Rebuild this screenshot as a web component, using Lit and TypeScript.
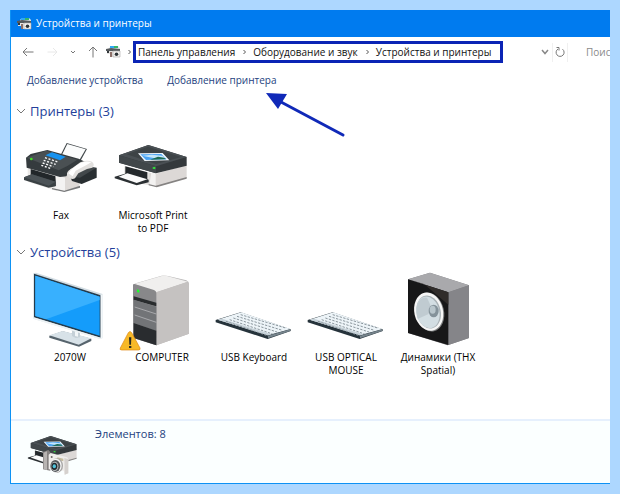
import { LitElement, html, svg, css, TemplateResult, SVGTemplateResult } from "lit";
import { customElement, state } from "lit/decorators.js";

const printerShape = svg`
  <path d="M343 124 L437 148 V184 L343 168Z" fill="#e4e2e0"/>
  <path d="M346 124 L412 142 V166 L346 148Z" fill="#23282b"/>
  <path d="M437 146 L530 120 V159 L440 185 L418 180 V144Z" fill="#dcd8d6"/>
  <path d="M424 142 L437 147 V184 L418 179Z" fill="#f3f2f1"/>
  <path d="M437 182 L530 156 V161 L440 187 L416 181 V177Z" fill="#858382"/>
  <path d="M314 155 L350 145 L416 164 V172 L380 181 L314 160Z" fill="#2b3033"/>
  <path d="M326 155 L352 145 L412 163 L380 174Z" fill="#fbfbfb"/>
  <path d="M327 91 L415 60 L530 96 V122 L438 145 L327 113Z" fill="#34393c"/>
  <path d="M327 91 L415 60 L530 96 L438 124Z" fill="#4a5054"/>
  <path d="M327 91 L438 124 V145 L327 113Z" fill="#41474a"/>
  <path d="M350 88 L414 65 L514 96 L438 117Z" fill="#3d4346"/>
  <path d="M384 85 L458 84 L478 106 L404 108Z" fill="#f4faff"/>
  <path d="M391 88 L454 87 L470 103 L408 105Z" fill="#4aa3f3"/>
  <path d="M396 92 L425 89 L458 92 L466 99 L430 99Z" fill="#c4e6fb"/>
  <path d="M420 104 L444 95 L462 98 L468 103Z" fill="#1c6b52"/>
  <path d="M428 127 L436 125 V133 L428 131Z" fill="#31dc3a"/>`;

const faxShape = svg`
  <path d="M53 128 L140 152 V198 L53 170Z" fill="#eceae8"/>
  <path d="M62 132 L137 154 V184 L62 160Z" fill="#22272a"/>
  <path d="M42 157 L66 148 L137 170 V184 L116 188 L42 165Z" fill="#3a4144"/>
  <path d="M42 157 L66 148 L137 170 L116 182Z" fill="#4c5357"/>
  <path d="M137 150 L208 128 V184 L163 200 L128 190 L139 184Z" fill="#dedad7"/>
  <path d="M137 150 L165 158 V199 L128 190 L139 184Z" fill="#f4f3f2"/>
  <path d="M126 189 L163 197 L210 182 V188 L163 201 L126 193Z" fill="#77797a"/>
  <path d="M150 94 L170 54 L231 72 L210 110Z" fill="#41474a"/>
  <path d="M153 95 L172 57 L227 73 L206 109Z" fill="#fbfcfc"/>
  <path d="M48 98 L62 87 L112 75 L206 101 L228 112 L212 122 L182 132 L169 154 L150 156 L50 128Z" fill="#353b3e"/>
  <path d="M50 98 L108 77 L202 104 L172 123 L146 136Z" fill="#4a5053"/>
  <path d="M106 91 L126 82 L167 95 L150 106Z" fill="#1692ef"/>
  <path d="M105 98 L144 111 M101 106 L137 118 M98 114 L130 125 M94 121 L124 131" stroke="#fff" stroke-width="4" stroke-dasharray="6 5" fill="none"/>
  <circle cx="64" cy="102" r="4" fill="#43df24"/>
  <path d="M180 154 L235 125 L260 128 V158 L215 177 L186 168Z" fill="#292f32"/>
  <path d="M182 155 L236 126 L258 129 L210 158Z" fill="#42484b"/>
  <path d="M171 150 Q169 140 183 132 L211 112 Q228 104 246 110 Q256 119 247 128 L231 132 L205 145 L195 160 Q181 166 171 150Z" fill="#e2e0de"/>
  <path d="M175 145 Q182 132 211 114 Q228 106 244 112 L224 123 L197 137 L188 154Z" fill="#fff"/>`;

const monitorShape = svg`
  <path d="M118 287 L158 274 L244 296 V303 L207 320 L118 293Z" fill="#57646d"/>
  <path d="M118 286 L158 273 L244 295 L206 314Z" fill="#d8e2e8"/>
  <path d="M186 262 L210 268 V292 L197 294 L186 288Z" fill="#c5d0d7"/>
  <path d="M195 268 L204 270 V290 L195 288Z" fill="#f2f6f8"/>
  <path d="M70 100 L78 98 L278 162 V294 L271 297 L70 236Z" fill="#d3dde3"/>
  <path d="M72 101 L272 166 V293 L72 232Z" fill="#263c4c"/>
  <path d="M76 107 L269 170 V287 L76 228Z" fill="#149cfb"/>
  <path d="M76 107 L269 170 V180 L108 238 L76 228Z" fill="#38b0fe"/>
  <path d="M272 165 L278 163 V294 L272 297Z" fill="#f3f7f9"/>
  <path d="M70 232 L272 293 V298 L70 237Z" fill="#eef3f5"/>`;

const computerShape = svg`
  <path d="M369 139 Q370 131 380 129 L455 107 Q464 105 474 108 L529 121 Q537 124 537 132 V281 L439 316 L369 292Z" fill="#b9b7b7"/>
  <path d="M372 132 L463 106 L534 125 L440 157Z" fill="#f0efee"/>
  <path d="M438 157 L529 127 Q537 125 537 134 V281 L439 316Z" fill="#c5c2c1"/>
  <path d="M369 136 Q369 130 376 133 L432 150 Q439 152 439 160 V316 L369 294Z" fill="#88888a"/>
  <path d="M371 169 L439 188 V199 L371 180Z" fill="#292c2e"/>
  <path d="M372 179 L439 200 V273 L372 249Z" fill="#727477"/>
  <path d="M374 201 L439 222 M374 225 L439 247" stroke="#c2c3c5" stroke-width="2"/>
  <path d="M371 249 L439 272 V316 L371 294Z" fill="#292c2f"/>
  <path d="M381 148 L388 150 V158 L381 156Z" fill="#1bff2b"/>
  <path d="M355 278 Q360 271 365 278 L390 324 Q392 330 385 330 H335 Q328 330 331 324Z" fill="#f7b928" stroke="#df8610" stroke-width="2"/>
  <path d="M357 292 H364 L363 314 H358Z M357 318 H364 V324 H357Z" fill="#2b2b22"/>`;

const keyRows = [0, 1, 2, 3, 4].map((r) => svg`
  <path d="M${122 - r * 11} ${164 + r * 5} L${257 - r * 13} ${204 + r * 6}" stroke="#8b969d" stroke-width="3" stroke-dasharray="7 4"/>`);

const keyboardShape = svg`
  <path d="M47 180 L122 157 L272 208 V213 L203 237 L47 187Z" fill="#26333b"/>
  <path d="M53 179 L124 157 L272 207 L204 226Z" fill="#edf4f8"/>
  <path d="M53 179 L204 226 L214 223 L66 176Z" fill="#c6d1d8"/>
  <path d="M204 227 L271 208 V213 L204 235Z" fill="#76848c"/>
  ${keyRows}`;

const speakerShape = svg`
  <path d="M114 58 L180 38 L297 76 V234 L233 256 L114 219Z" fill="#7d7d80"/>
  <path d="M114 58 L180 38 L297 76 L235 97Z" fill="#a9a9ac"/>
  <path d="M235 97 L297 76 V234 L235 255Z" fill="#858589"/>
  <path d="M114 58 L235 97 V255 L114 219Z" fill="#171718"/>
  <path d="M114 58 L235 97 V134 L162 72Z" fill="#302c2a"/>
  <ellipse cx="179" cy="156" rx="43" ry="59" transform="rotate(-13 179 156)" fill="#7c7e7f"/>
  <ellipse cx="176" cy="155" rx="43" ry="58" transform="rotate(-13 176 155)" fill="#f6f6f6"/>
  <ellipse cx="176" cy="156" rx="36" ry="50" transform="rotate(-13 176 156)" fill="#a9b2b6"/>
  <ellipse cx="174" cy="157" rx="34" ry="48" transform="rotate(-13 174 157)" fill="#d3dee3"/>
  <path d="M142 132 Q153 108 171 113 L187 148 L174 163 L143 177 Q136 155 142 132Z" fill="#c0cbd1"/>
  <ellipse cx="191" cy="153" rx="15" ry="19" fill="#84929a"/>
  <ellipse cx="188" cy="149" rx="9" ry="12" fill="#b9c6cc"/>`;

const cameraShape = svg`
  <path d="M132 234 L148 228 L154 234 V290 L132 286Z" fill="#858180"/>
  <path d="M134 236 L144 232 V288 L134 285Z" fill="#b8b4b2"/>
  <path d="M149 242 L155 237 L205 250 L208 257 V298 L197 302 L194 290 L149 286Z" fill="#efedeb"/>
  <path d="M196 252 L208 256 V298 L197 302Z" fill="#d5d1ce"/>
  <path d="M175 250 L193 254 V262 L175 258Z" fill="#c5bc9e"/>
  <circle cx="158" cy="249" r="3" fill="#6b6866"/>
  <ellipse cx="174" cy="275" rx="18" ry="22" fill="#a5a4a3"/>
  <ellipse cx="171" cy="275" rx="17" ry="21" fill="#f6f6f6"/>
  <ellipse cx="169" cy="276" rx="15" ry="18" fill="#53575a"/>
  <ellipse cx="167" cy="277" rx="11" ry="14" fill="#b5b8b9"/>
  <ellipse cx="166" cy="277" rx="9" ry="11" fill="#23292d"/>
  <ellipse cx="166" cy="277" rx="5" ry="6" fill="#4fc2da"/>`;

interface Device {
  name: string;
  viewBox: string;
  shape: SVGTemplateResult;
}

interface Group {
  title: string;
  kind: string;
  count: number;
  items: Device[];
}

const groups: Group[] = [
  {
    title: "Принтеры",
    kind: "printers",
    count: 3,
    items: [
      { name: "Fax", viewBox: "33 15 240 234", shape: faxShape },
      { name: "Microsoft Print to PDF", viewBox: "309 15 240 234", shape: printerShape },
    ],
  },
  {
    title: "Устройства",
    kind: "devices",
    count: 5,
    items: [
      { name: "2070W", viewBox: "60 96 240 234", shape: monitorShape },
      { name: "COMPUTER", viewBox: "336 96 240 234", shape: computerShape },
      { name: "USB Keyboard", viewBox: "42 36 240 234", shape: keyboardShape },
      { name: "USB OPTICAL MOUSE", viewBox: "42 36 240 234", shape: keyboardShape },
      { name: "Динамики (THX Spatial)", viewBox: "84 36 240 234", shape: speakerShape },
    ],
  },
];

const folderIcon = html`<svg class="folder" viewBox="0 0 15 14" aria-hidden="true">
  <path d="M3 3 L5 1 H12 L14 3 V5 H3Z" fill="#dfe8ec"/>
  <path d="M4 1 H8 V3 H4Z" fill="#2ea8f5"/><path d="M8 1 H12 V3 H8Z" fill="#35b56a"/>
  <path d="M0 4 L5 3 L14 4 V6 H0Z" fill="#54595c"/>
  <path d="M1 6 H7 V12 H5 V9 H1Z" fill="#e6e4e2"/><path d="M1 6 H3 V8 H1Z" fill="#33383b"/>
  <path d="M4 7 H6 V12 H4Z" fill="#8d6f68"/>
  <path d="M7 6 H14 V12 H7Z" fill="#f4f2f0" stroke="#a8a6a4" stroke-width=".6"/>
  <circle cx="10.500" cy="9.200" r="1.800" fill="#2d3336"/>
</svg>`;

const stroke = (cls: string, box: string, d: string): TemplateResult =>
  html`<svg class=${cls} viewBox=${box} aria-hidden="true"><path d=${d} /></svg>`;

const crumbChevron = () => stroke("line crumb-chevron", "0 0 6 8", "M1.500 2 L3.500 4 L1.500 6");

@customElement("app-root")
export class AppRoot extends LitElement {
  @state() private closed = new Set<string>();

  static styles = css`
    :host {
      display: block;
      box-sizing: border-box;
      min-height: 100vh;
      padding: 10px;
      background: #add7ff;
      font: 10px/13px "Open Sans", "Noto Sans", sans-serif;
      color: #111;
    }
    * { box-sizing: border-box; }
    button, input { font: inherit; color: inherit; border: 0; background: none; padding: 0; margin: 0; }
    a { color: inherit; text-decoration: none; }
    ul, ol { list-style: none; margin: 0; padding: 0; }
    svg { display: block; flex: none; }
    .window {
      position: relative;
      display: flex;
      flex-direction: column;
      min-height: calc(100vh - 20px);
      background: #fff;
      border: solid #0d92f4;
      border-width: 0 0 1px 1px;
      overflow: hidden;
    }
    .titlebar {
      display: flex;
      align-items: center;
      gap: 4px;
      height: 27px;
      padding: 0 6px;
      background: #007bef;
      color: #fff;
    }
    .titlebar h1 { margin: 0; font-size: 10px; font-weight: 400; }
    .folder { width: 15px; height: 14px; }
    .address {
      display: flex;
      align-items: center;
      height: 30px;
      padding-left: 11px;
    }
    .nav { display: flex; align-items: center; gap: 12px; margin-right: 8px; }
    .line { fill: none; stroke: #777; }
    .arrow { width: 12px; height: 12px; }
    .up { width: 10px; height: 12px; }
    .faint { stroke: #e8e8e8; }
    .small { width: 8px; height: 8px; }
    .history { width: 6px; height: 8px; }
    .expand { stroke-width: 1.5; stroke: #888; }
    .crumb-chevron { width: 6px; height: 8px; stroke: #555; }
    .path { display: flex; align-items: center; flex: 1; gap: 6px; min-width: 0; }
    .crumbs {
      display: flex;
      align-items: center;
      height: 22px;
      padding: 0 9px 0 2px;
      border: 3px solid #0b24b5;
      white-space: nowrap;
      margin-left: -6px;
    }
    .crumbs li { display: flex; align-items: center; }
    .crumbs .crumb-chevron { margin: 0 5px 0 7px; }
    .tools { display: flex; align-items: center; height: 19px; }
    .tool { display: grid; place-items: center; width: 15px; height: 19px; border-right: 1px solid #f0f0f0; }
    .search { width: 24px; margin-left: 18px; height: 19px; outline: 0; }
    .search::placeholder { color: #8a8a8a; opacity: 1; }
    .commands {
      display: flex;
      align-items: center;
      gap: 24px;
      height: 26px;
      padding: 0 16px;
      color: #24417e;
    }
    main { flex: 1; padding: 8px 0 12px; }
    .group { margin-bottom: 7px; }
    .group h2 { margin: 0 0 9px; font-size: 13px; font-weight: 400; line-height: 20px; color: #233f9b; }
    .toggle { display: flex; align-items: center; gap: 4px; padding-left: 5px; }
    .toggle svg { width: 10px; height: 8px; stroke: #777; }
    .items { display: flex; flex-wrap: wrap; }
    .printers { padding-left: 4px; }
    .devices { padding: 1px 0 0 13px; }
    .item { width: 92px; }
    .item button { display: flex; flex-direction: column; align-items: center; gap: 1px; width: 100%; }
    .item svg { width: 80px; height: 78px; overflow: visible; }
    .label { max-width: 80px; text-align: center; color: #000; }
    .status {
      display: flex;
      align-items: flex-start;
      min-height: 64px;
      padding: 6px 16px;
      gap: 18px;
      border-top: 2px solid #e6f0fd;
      background: #fbffff;
      color: #24417e;
      font-size: 11px;
    }
    .status svg { width: 50px; height: 40px; margin-top: 8px; }
    .pointer { position: absolute; left: 254px; top: 81px; width: 82px; height: 48px; pointer-events: none; }
  `;

  private toggle(kind: string) {
    const next = new Set(this.closed);
    if (!next.delete(kind)) next.add(kind);
    this.closed = next;
  }

  private renderGroup(group: Group) {
    const open = !this.closed.has(group.kind);
    return html`<section class="group">
      <h2>
        <button class="toggle" aria-expanded=${open ? "true" : "false"} @click=${() => this.toggle(group.kind)}>
          ${stroke("line", "0 0 10 8", "M1 2 L5 6 L9 2")}
          <span>${group.title} (${group.count})</span>
        </button>
      </h2>
      ${open
        ? html`<ul class="items ${group.kind}">
            ${group.items.map((item) => html`<li class="item">
              <button>
                <svg viewBox=${item.viewBox} aria-hidden="true">${item.shape}</svg>
                <span class="label">${item.name}</span>
              </button>
            </li>`)}
          </ul>`
        : null}
    </section>`;
  }

  render() {
    const crumbs = ["Панель управления", "Оборудование и звук", "Устройства и принтеры"];
    const total = groups.reduce((n, g) => n + g.count, 0);
    return html`<div class="window">
      <header class="titlebar">${folderIcon}<h1>Устройства и принтеры</h1></header>
      <div class="address">
        <div class="nav">
          <button aria-label="Назад">${stroke("line arrow", "0 0 12 12", "M11.500 6 H1 M5 2 L1 6 L5 10")}</button>
          <button aria-label="Вперёд">${stroke("line arrow faint", "0 0 12 12", "M1.500 6 H11 M7 2 L11 6 L7 10")}</button>
          <button aria-label="Последние расположения">${stroke("line history", "1 0 6 8", "M2 3 L4 5 L6 3")}</button>
          <button aria-label="Вверх">${stroke("line up", "1 0 10 12", "M6 11.500 V1 M2 5 L6 1 L10 5")}</button>
        </div>
        <nav class="path" aria-label="Адрес">
          ${folderIcon}${crumbChevron()}
          <ol class="crumbs">
            ${crumbs.map((name, i) => html`<li>${i ? crumbChevron() : null}<a href="#">${name}</a></li>`)}
          </ol>
        </nav>
        <div class="tools">
          <button class="tool" aria-label="Журнал">${stroke("line small expand", "0 0 8 8", "M1 2 L4 5.500 L7 2")}</button>
          <button class="tool" aria-label="Обновить">${stroke("line arrow", "0 0 12 12", "M4 3 A4 4 0 1 0 8.500 3.200 M2.500 1.500 H5 V4.500")}</button>
        </div>
        <input class="search" type="text" aria-label="Поиск" placeholder="Поиск" />
      </div>
      <div class="commands">
        <button>Добавление устройства</button>
        <button>Добавление принтера</button>
      </div>
      <main>${groups.map((g) => this.renderGroup(g))}</main>
      <footer class="status">
        <svg viewBox="84 183 150 120" aria-hidden="true">
          <g transform="translate(-126 145.400) scale(.677)">${printerShape}</g>
          ${cameraShape}
        </svg>
        <span>Элементов: ${total}</span>
      </footer>
      <svg class="pointer" viewBox="0 0 82 48" aria-hidden="true">
        <path d="M16 11 L78 44" stroke="#1029b8" stroke-width="3" stroke-linecap="round"/>
        <path d="M1 2 L22 3 L13 18Z" fill="#1029b8"/>
      </svg>
    </div>`;
  }
}
